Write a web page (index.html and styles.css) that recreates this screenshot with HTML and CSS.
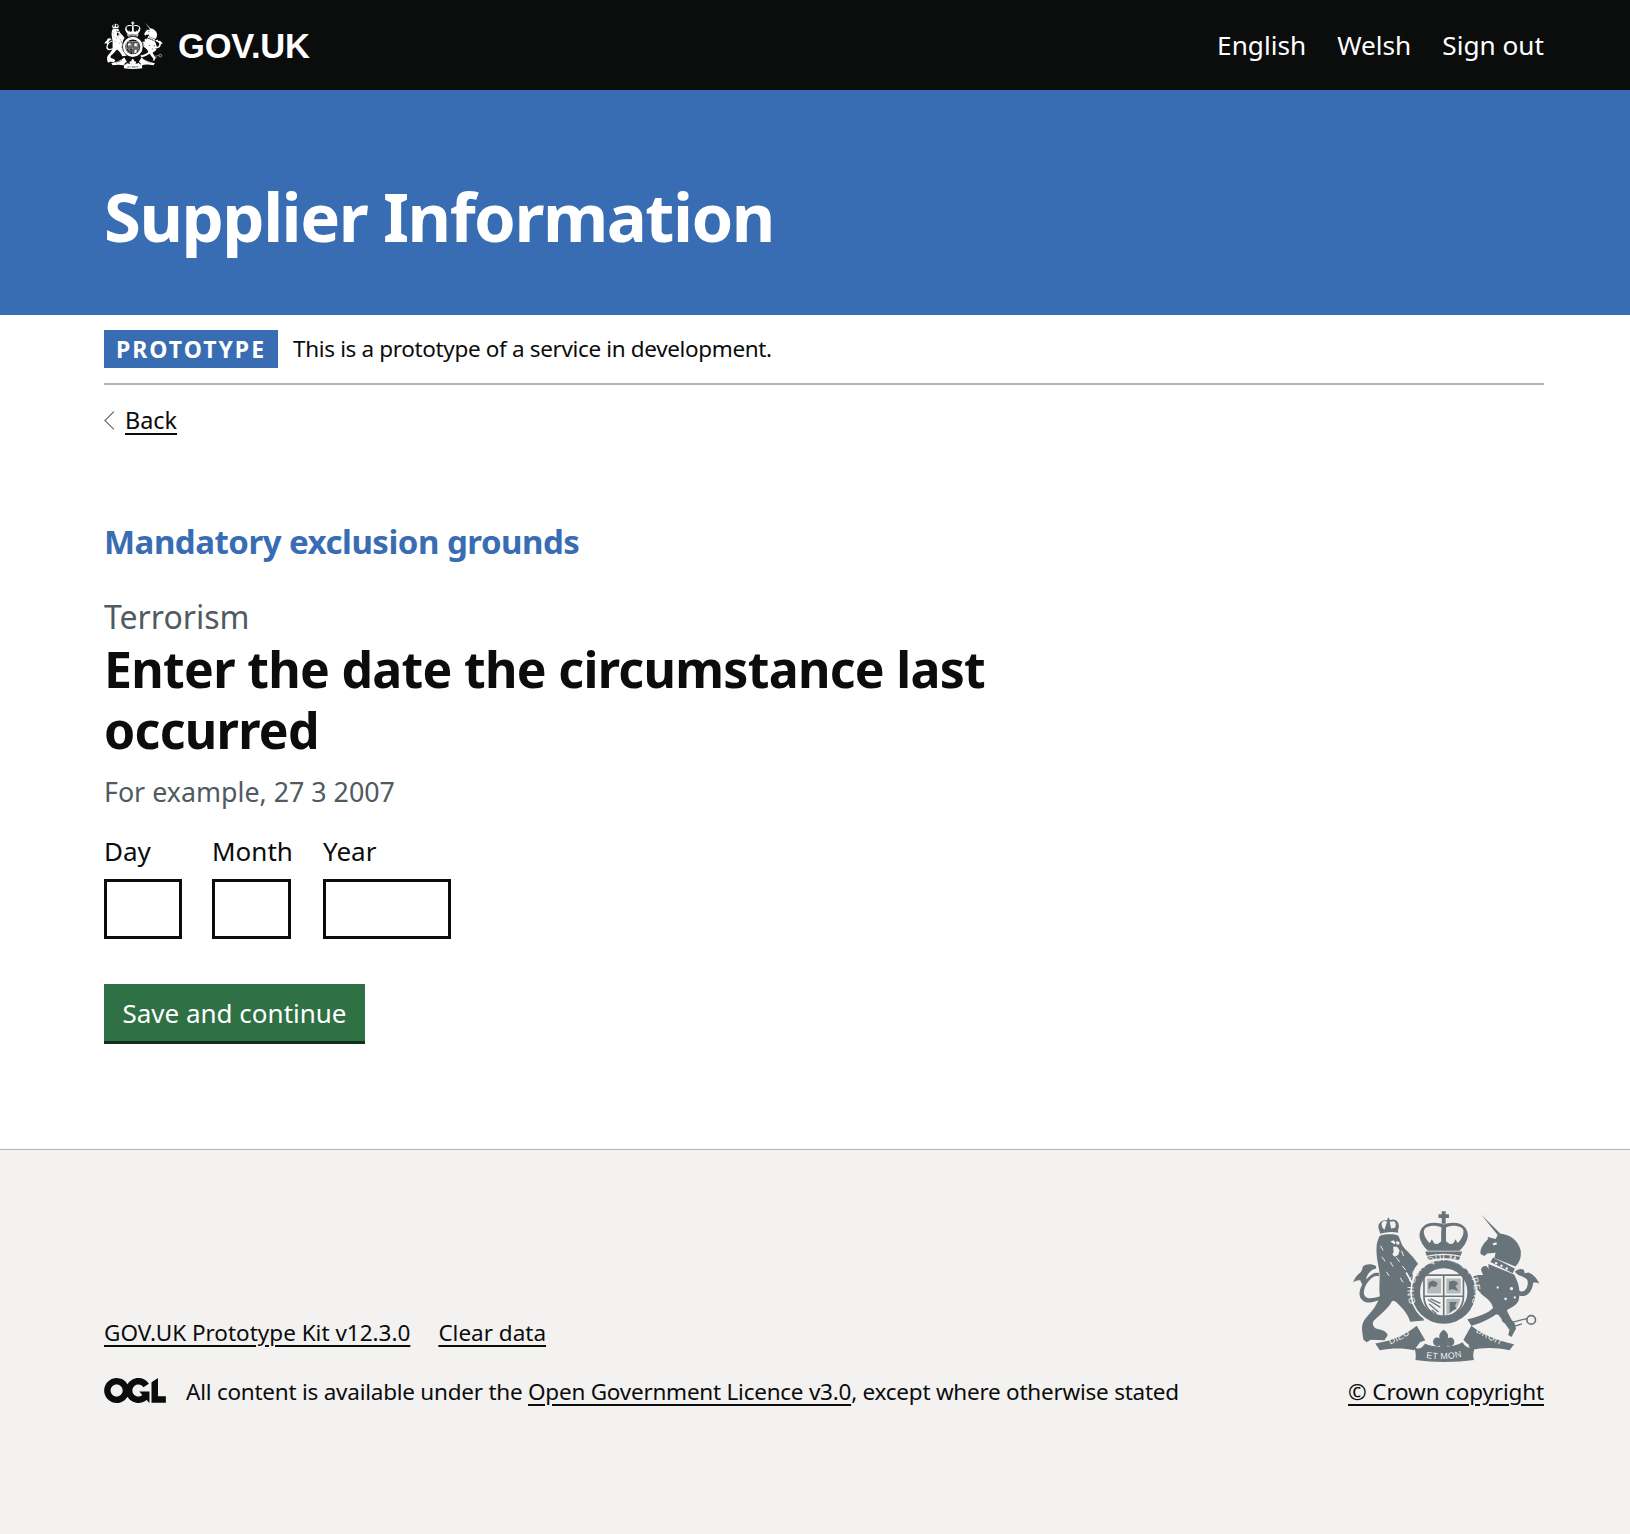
FILE: index.html
```html
<!DOCTYPE html>
<html lang="en">
<head>
<meta charset="utf-8">
<title>Supplier Information</title>
<link rel="stylesheet" href="styles.css">
</head>
<body>
<svg class="defs" width="0" height="0" aria-hidden="true">
  <defs>
    <path id="ringTop" d="M256 340 A92 92 0 1 1 424 340"/>
    <path id="ribL" d="M165 470 Q205 455 250 425"/>
    <path id="ribC" d="M272 503 Q340 518 410 498"/>
    <path id="ribR" d="M428 420 Q470 448 525 472"/>
    <symbol id="crest" viewBox="62 56 570 462">
      <g class="crest-shape">
        <!-- central crown -->
        <path d="M334 60h12v9h10v11h-10v18h-12V80h-10V69h10z"/>
        <path fill-rule="evenodd" d="M340 100c-16-7-48-9-62 6-18 18-16 44 14 74h96c30-30 32-56 14-74-14-15-46-13-62-6zm-7 9v42l-11 8-24-2-6-6c-16-22-15-36-5-42 12-6 32-7 46 0zm14 0c14-7 34-6 46 0 10 6 11 20-5 42l-6 6-24 2-11-8z"/>
        <path d="M333 120h14v40h-14zM304 145l8 14h-16zM376 145l8 14h-16z"/>
        <path d="M284 182h112l-4 13q-52-12-104 0zM290 198q50-10 100 0l-3 10q-47-9-94 0z"/>
        <!-- lion crown -->
        <path fill-rule="evenodd" d="M172 78l5 9c8-4 18-2 22 4 6 8 6 18 2 27l1 7q-28-5-55 3l-2-8c-5-10-5-20 2-26 5-6 14-8 20-6zm-18 14c-4 4-3 12 0 18l6 6 8-24c-5-3-10-3-14 0zm36-2l-14 2 4 20 12-2c4-8 2-16-2-20z"/>
        <!-- lion body -->
        <path d="M146 134C165 128 190 128 202 134C208 146 210 156 216 166C228 182 248 196 262 220C250 232 244 248 246 264L250 304C254 332 264 354 276 372L280 392L238 396L232 380C224 364 212 352 200 340C192 332 186 330 182 334C176 350 150 372 128 392C122 400 124 410 134 416C150 420 164 422 170 436L160 452L118 450L106 458L96 450C92 425 88 410 98 392C112 372 136 352 146 318C142 290 148 265 144 240C140 215 134 195 136 170C136 155 140 145 146 134Z"/>
        <path class="crest-cut" d="M178 152l10-4 6 8-4 4zM196 150l10 4-2 8-8-2zM186 168l12 0 8 10-4 14-10 6-8-6 4-10z"/>
        <path class="crest-line" d="M148 165l8 14M152 198l10 14M178 214l8 14M196 200l10 14M212 180l6 16M214 226l10 12M166 244l8 12M208 262l8 14"/>
        <path class="crest-line-thick" d="M226 246l32 58"/>
        <!-- lion tail -->
        <path d="M156 326c-20 8-46 16-58 8-14-8-16-22-12-36 4-14 14-28 26-38 8-8 20-16 32-12l-2 10c-10-4-18 2-24 8-10 10-18 22-20 34-2 10 0 18 8 22 8 6 28 0 50-6z"/>
        <path d="M134 226c-12-6-28-8-40 2-2 12-4 16-10 20-10 8-16 18-19 28 8-6 16-8 22-6 2 10 8 16 14 16l4-24c4-14 16-26 30-28z"/>
        <!-- unicorn -->
        <path d="M454 70l60 60-7 6z"/>
        <path d="M506 128c30-2 60 18 68 50 2 22-2 34-16 50l-64-26 4-16-26 2-8 8-12-6c-2-14 6-30 22-44l0-8 24 6z"/>
        <path class="crest-cut" d="M488 158l12-4 2 6-10 4z"/>
        <path d="M490 200l66 34-6 14-68-34z"/>
        <path class="crest-cut" d="M498 213l6 3-3 6-6-3zM514 221l6 3-3 6-6-3zM530 229l6 3-3 6-6-3z"/>
        <path d="M476 220l78 32c14 24 20 50 14 78-6 16-24 22-36 30 4 14 22 40 28 56l-14 26-10-6 4-16-30-40c-2-6-6-8-12-6-18 14-44 26-74 34l-12-20c28-6 62-16 78-34-4-20-20-30-32-40-6-4-12-10-14-16-10 8-20 4-24-2l-6-14 8-10-8-10 14-4c10-4 22-6 32-4l-6-14c-2-6 4-14 12-14 6 0 10 6 10 14z"/>
        <path class="crest-cut" d="M546 290a5 5 0 1 0 .1 0zM528 322a4 4 0 1 0 .1 0zM556 318a3.500 3.500 0 1 0 .1 0zM504 288a3.500 3.500 0 1 0 .1 0zM462 205a7 7 0 1 0 .1 0z"/>
        <!-- unicorn tail -->
        <path d="M556 244c8-8 18-12 28-6l2 10 12-2c14 6 26 18 33 34-6-4-14-5-19-3-2 20-12 36-26 40-14 3-28-6-34-22l8-5c6 12 16 16 24 12 10-6 14-20 10-34-8-8-18-12-26-14-4-2-8-6-12-10z"/>
        <circle cx="528" cy="388" r="9" class="crest-open"/><circle cx="546" cy="408" r="9" class="crest-open"/><circle cx="606" cy="390" r="13" class="crest-open"/>
        <path class="crest-chain" d="M536 392l18 4 22-6 18-4M554 410l24-8"/>
        <!-- garter -->
        <circle cx="340" cy="305" r="102" class="crest-bg"/>
        <circle cx="340" cy="305" r="97"/>
        <circle cx="340" cy="305" r="72" class="crest-bg"/>
        <!-- shield -->
        <path class="crest-outline" d="M280 254h120v66c0 34-28 56-60 68-32-12-60-34-60-68zM340 254v134M280 318h120"/>
        <path class="crest-quarter" d="M290 264h42v46h-42zM348 264h44v46h-44zM348 326h42c-2 24-20 40-42 50z"/>
        <path class="crest-detail" d="M294 276l14-6 14 8-6 12-14-2-8 10zM356 274l16-4 12 8-8 10 8 14-18-6-10 4zM358 336h22l-6 12 6 8-14 6-8 8z"/>
        <path class="crest-harp" d="M292 328l38 24M296 342l28 24M304 360l14 12M300 326l30 14"/>
        <text class="crest-text" font-size="27"><textPath href="#ringTop" startOffset="50%" text-anchor="middle">HONI SOIT QUI MAL Y PENSE</textPath></text>
        <!-- ribbons -->
        <path d="M132 462c50-8 92-26 126-54l26 44-16 6-18 24c-34-8-70-6-104 0z"/>
        <path d="M250 474c16 6 26 2 32-12 32 14 84 14 116-4 6 14 18 20 36 16-4 14-6 28-2 38-56 8-124 8-178 0 2-12 2-26-4-38z"/>
        <path d="M400 450l24-42c34 28 78 44 130 56l-14 18c-40-8-78-10-118 0l-6-14z"/>
        <path class="crest-line" d="M284 462l-18 8M398 458l18 8"/>
        <path d="M340 420c12 8 16 18 12 26 10-6 22 0 20 14-4 10-14 12-20 8l-4 12h-16l-4-12c-6 4-16 2-20-8-2-14 10-20 20-14-4-8 0-18 12-26z"/>
        <text class="crest-text" font-size="27"><textPath href="#ribL" startOffset="50%" text-anchor="middle">DIEU</textPath></text>
        <text class="crest-text" font-size="27"><textPath href="#ribC" startOffset="50%" text-anchor="middle">ET MON</textPath></text>
        <text class="crest-text" font-size="27"><textPath href="#ribR" startOffset="50%" text-anchor="middle">DROIT</textPath></text>
      </g>
    </symbol>
  </defs>
</svg>

<header class="topbar">
  <div class="topbar-inner">
    <a class="brand" href="#">
      <svg class="brand-crest" aria-hidden="true"><use href="#crest"/></svg>
      <span class="brand-name">GOV.UK</span>
    </a>
    <nav class="topnav">
      <a href="#">English</a>
      <a href="#">Welsh</a>
      <a href="#">Sign out</a>
    </nav>
  </div>
</header>

<div class="hero">
  <div class="hero-title">Supplier Information</div>
</div>

<div class="wrap">
  <div class="phase">
    <strong class="tag">PROTOTYPE</strong>
    <span class="phase-text">This is a prototype of a service in development.</span>
  </div>
  <a class="back" href="#">Back</a>

  <main class="main">
    <h2 class="section">Mandatory exclusion grounds</h2>
    <div class="caption">Terrorism</div>
    <h1 class="title">Enter the date the circumstance last occurred</h1>
    <div class="hint">For example, 27 3 2007</div>
    <div class="date">
      <div class="date-item date-day">
        <label for="d">Day</label>
        <input id="d" class="input" type="text">
      </div>
      <div class="date-item date-month">
        <label for="m">Month</label>
        <input id="m" class="input" type="text">
      </div>
      <div class="date-item date-year">
        <label for="y">Year</label>
        <input id="y" class="input" type="text">
      </div>
    </div>
    <button class="button" type="button">Save and continue</button>
  </main>
</div>

<footer class="footer">
  <div class="footer-inner">
    <div class="footer-left">
      <ul class="footer-links">
        <li><a href="#">GOV.UK Prototype Kit v12.3.0</a></li>
        <li><a href="#">Clear data</a></li>
      </ul>
      <div class="licence">
        <svg class="ogl" viewBox="0 0 483.2 195.7" aria-hidden="true"><path d="M421.5 142.8V.1l-50.7 32.3v161.1h112.4v-50.7zm-122.3-9.6A47.12 47.12 0 0 1 221 97.8c0-26 21.1-47.1 47.1-47.1 16.7 0 31.4 8.7 39.7 21.8l42.7-27.2A97.63 97.63 0 0 0 268.1 0c-36.5 0-68.3 20.1-85.1 49.7A98 98 0 0 0 97.8 0C43.9 0 0 43.9 0 97.8s43.9 97.8 97.8 97.8c36.5 0 68.3-20.1 85.1-49.7a97.76 97.76 0 0 0 149.6 25.4l19.4 22.2h3v-87.8h-80l24.3 27.5zM97.8 145c-26 0-47.1-21.1-47.1-47.1s21.1-47.1 47.1-47.1 47.2 21 47.2 47S123.8 145 97.8 145"/></svg>
        <span class="licence-text">All content is available under the <a href="#">Open Government Licence v3.0</a>, except where otherwise stated</span>
      </div>
    </div>
    <div class="footer-right">
      <svg class="footer-crest" aria-hidden="true"><use href="#crest"/></svg>
      <a class="copyright" href="#">© Crown copyright</a>
    </div>
  </div>
</footer>
</body>
</html>
```
FILE: styles.css
```css
* { box-sizing: border-box; }
html, body { margin: 0; padding: 0; }
body {
  --bg: #fff;
  font-family: "Noto Sans", sans-serif;
  color: #0b0c0c;
  background: #f3f2f1;
  width: 1630px;
  min-height: 1534px;
}
a { color: inherit; }
.defs { position: absolute; }

.crest-shape { fill: currentColor; }
.crest-cut { fill: var(--bg); }
.crest-bg { fill: var(--bg); }
.crest-outline { fill: none; stroke: currentColor; stroke-width: 5; }
.crest-quarter { fill: currentColor; opacity: .45; }
.crest-detail { fill: currentColor; }
.crest-harp { fill: none; stroke: currentColor; stroke-width: 4; }
.crest-line { fill: none; stroke: var(--bg); stroke-width: 3; }
.crest-line-thick { fill: none; stroke: var(--bg); stroke-width: 5; }
.crest-chain { fill: none; stroke: currentColor; stroke-width: 4; }
.crest-open { fill: none; stroke: currentColor; stroke-width: 5; }
.crest-text { fill: var(--bg); font-family: "Liberation Sans", sans-serif; letter-spacing: 1px; }

.topbar { background: #0b0c0c; color: #fff; height: 90px; --bg: #0b0c0c; }
.topbar-inner {
  height: 100%;
  margin: 0 86px 0 104px;
  display: flex;
  align-items: center;
  justify-content: space-between;
}
.brand { display: flex; align-items: center; gap: 15px; text-decoration: none; }
.brand-crest { width: 59px; height: 50px; display: block; }
.brand-name { font: 700 34.500px/1 "Liberation Sans", sans-serif; letter-spacing: -.2px; padding-top: 3px; }
.topnav { display: flex; gap: 31px; font-size: 26.200px; line-height: 32px; }
.topnav a { text-decoration: none; }

.hero { background: #396db3; height: 225px; padding: 28px 104px 0; display: flex; align-items: center; }
.hero-title { color: #fff; font-size: 67px; font-weight: 700; line-height: 1; letter-spacing: -1.5px; }

.wrap { background: #fff; padding: 15px 86px 0 104px; height: 834px; }
.phase {
  display: flex;
  align-items: center;
  gap: 15px;
  padding-bottom: 15px;
  border-bottom: 2px solid #b1b4b6;
  font-size: 22.500px;
  letter-spacing: -.35px;
  box-sizing: content-box;
  height: 38px;
}
.phase-text { padding-bottom: 2px; }
.tag {
  background: #396db3;
  color: #fff;
  height: 38px;
  padding: 0 12px;
  display: flex;
  align-items: center;
  font-size: 23px;
  letter-spacing: 2px;
}
.back {
  display: inline-block;
  margin-top: 20px;
  margin-left: 21px;
  position: relative;
  font-size: 23.400px;
  line-height: 30px;
  text-decoration: underline;
  text-underline-offset: 4px;
}
.back::before {
  content: "";
  position: absolute;
  left: -18px;
  top: 9px;
  width: 12px;
  height: 12px;
  border-left: 1px solid #505a5f;
  border-bottom: 1px solid #505a5f;
  transform: rotate(45deg);
}

.main { padding-top: 86px; }
.section { margin: 0; color: #396db3; font-size: 33px; line-height: 42px; font-weight: 700; letter-spacing: -.5px; }
.caption { margin-top: 34px; color: #505a5f; font-size: 32px; line-height: 40px; }
.title { margin: 2px 0 0; width: 960px; font-size: 50px; line-height: 61px; font-weight: 700; letter-spacing: -.7px; }
.hint { margin-top: 14px; color: #505a5f; font-size: 26.800px; line-height: 34px; }
.date { display: flex; margin-top: 25px; }
.date-item label { display: block; font-size: 26px; line-height: 34px; margin-bottom: 11px; }
.date-day { width: 108px; }
.date-month { width: 111px; }
.input { display: block; height: 60px; border: 3px solid #0b0c0c; background: #fff; border-radius: 0; padding: 0; }
.date-day .input { width: 78px; }
.date-month .input { width: 79px; }
.date-year .input { width: 128px; }
.button {
  display: block;
  margin-top: 45px;
  width: 261px;
  height: 60px;
  padding: 0;
  background: #2f7045;
  color: #fff;
  border: 0;
  border-bottom: 3px solid #0f2e1c;
  border-radius: 0;
  font-family: inherit;
  font-size: 26px;
}

.footer { border-top: 1px solid #b1b4b6; background: #f3f2f1; --bg: #f3f2f1; font-size: 22.500px; }
.footer-inner {
  margin: 0 86px 0 104px;
  padding-top: 60px;
  display: flex;
  justify-content: space-between;
  align-items: flex-end;
}
.footer-links { list-style: none; margin: 0 0 28px; padding: 0; display: flex; gap: 28px; }
.footer a { text-underline-offset: 4px; }
.licence { display: flex; align-items: center; gap: 20px; }
.licence-text { letter-spacing: -.24px; }
.ogl { width: 62px; height: 25px; fill: #0b0c0c; display: block; margin-bottom: 2px; }
.footer-right { display: flex; flex-direction: column; align-items: flex-end; }
.footer-crest { width: 188px; height: 152px; color: #68737a; margin: 0 4px 14px 0; display: block; }
.copyright { letter-spacing: -.15px; }
```
